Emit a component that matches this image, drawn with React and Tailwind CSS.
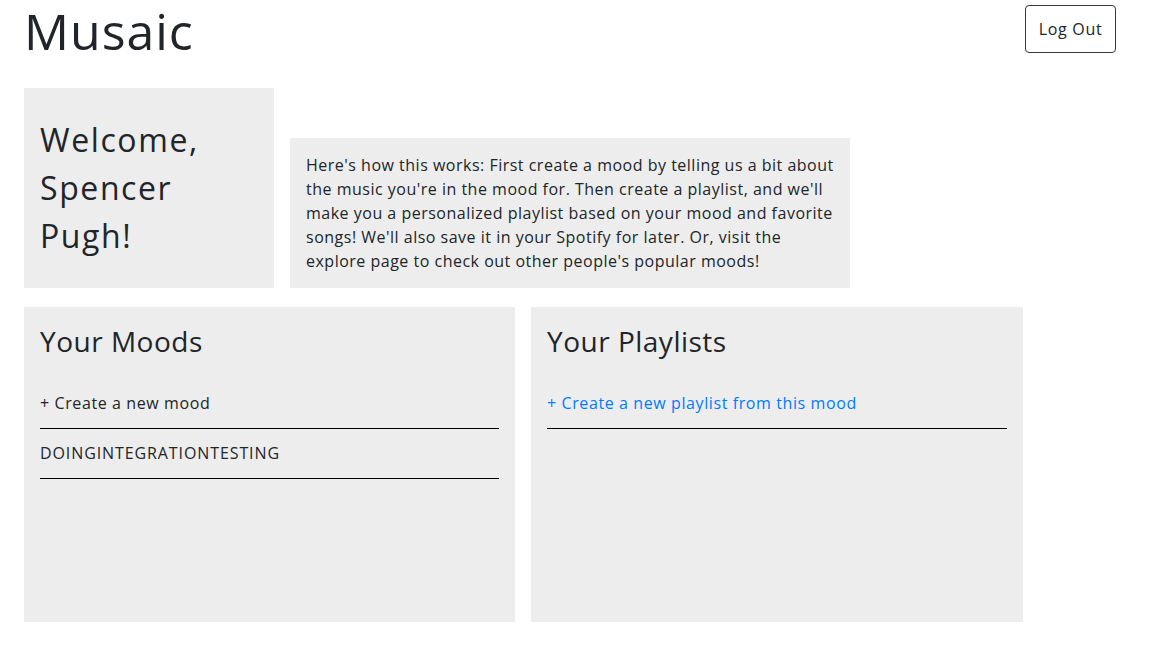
const FONT = "font-['Open_Sans',sans-serif]";

const HOW_IT_WORKS = [
  "Here's how this works: First create a mood by telling us a bit about",
  "the music you're in the mood for. Then create a playlist, and we'll",
  'make you a personalized playlist based on your mood and favorite',
  "songs! We'll also save it in your Spotify for later. Or, visit the",
  "explore page to check out other people's popular moods!",
];

function ListItem({ children, className = '' }) {
  return (
    <div className={`h-[50px] flex items-center border-b border-black text-base ${className}`}>
      {children}
    </div>
  );
}

function Panel({ title, children }) {
  return (
    <div className="bg-[#ededed] h-[315px] px-4 pt-[18px]">
      <h2 className="text-[28px] leading-[1.2] tracking-[0.5px] mb-5">{title}</h2>
      {children}
    </div>
  );
}

export default function App() {
  return (
    <div className={`${FONT} text-[#212529] bg-white min-h-[648px] tracking-[0.6px]`}>
      {/* Header */}
      <div className="flex justify-between items-start pl-6 pr-[38px] pt-[2px]">
        <h1 className="text-[50px] leading-[58px] tracking-[1px]">Musaic</h1>
        <button className="mt-[3px] h-12 w-[91px] border border-[#343a40] rounded text-base tracking-[0.7px]">Log Out</button>
      </div>

      {/* Welcome + intro */}
      <div className="flex items-end gap-4 px-6 mt-[28px]">
        <div className="bg-[#ededed] w-[250px] h-[200px] px-4 py-[28px] text-[32px] leading-[48px] tracking-[1.6px]">
          <div>Welcome,</div>
          <div>Spencer</div>
          <div>Pugh!</div>
        </div>
        <div className="bg-[#ededed] w-[560px] h-[150px] px-4 py-[15px] text-base leading-6 tracking-[0.5px]">
          {HOW_IT_WORKS.map((line) => (
            <div key={line} className="whitespace-nowrap">{line}</div>
          ))}
        </div>
      </div>

      {/* Moods + playlists */}
      <div className="grid grid-cols-[491px_492px] gap-4 px-6 mt-[19px]">
        <Panel title="Your Moods">
          <ListItem>+ Create a new mood</ListItem>
          <ListItem className="tracking-[0.9px]">DOINGINTEGRATIONTESTING</ListItem>
        </Panel>
        <Panel title="Your Playlists">
          <ListItem className="text-[#007bff]">+ Create a new playlist from this mood</ListItem>
        </Panel>
      </div>
    </div>
  );
}
